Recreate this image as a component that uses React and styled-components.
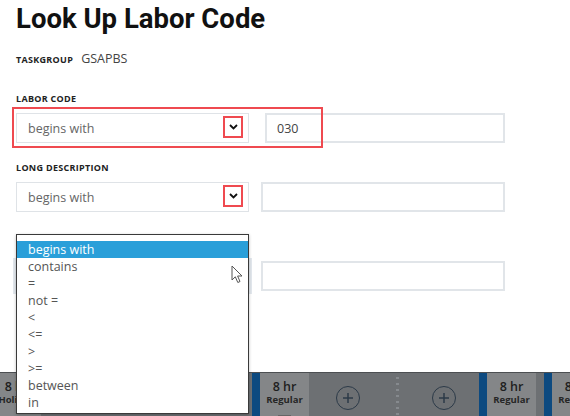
import styled, { createGlobalStyle } from "styled-components"

const GlobalStyle = createGlobalStyle`
  body {
    margin: 0;
    background: #fff;
    font-family: "Open Sans", "Liberation Sans", sans-serif;
  }
`

const Page = styled.div`
  width: 570px;
  height: 416px;
  position: relative;
  overflow: hidden;
  display: flex;
  flex-direction: column;
`

const Modal = styled.div`
  height: 372px;
  flex: none;
  background: #fff;
  padding-left: 16px;
  box-sizing: border-box;
`

const Title = styled.h1`
  margin: 4px 0 0;
  font-family: Roboto, "Liberation Sans", sans-serif;
  font-weight: 700;
  font-size: 27.5px;
  line-height: 30px;
  color: #111;
`

const InfoRow = styled.div`
  margin-top: 17px;
  display: flex;
  align-items: baseline;
  gap: 8px;
  line-height: 16px;
`

const Label = styled.div`
  font-size: 9px;
  font-weight: 700;
  line-height: 10px;
  color: #222;
  letter-spacing: 0.3px;
`

const Value = styled.span`
  font-size: 12.5px;
  color: #444;
`

const Field = styled.div`
  margin-top: ${p => p.$top}px;
`

const Row = styled.div`
  margin-top: 9px;
  width: 489px;
  height: 30px;
  display: flex;
  gap: ${p => p.$gap}px;
`

const Select = styled.div`
  width: 233px;
  flex: none;
  box-sizing: border-box;
  border: 1px solid #dfe3e7;
  background: #fff;
  display: flex;
  align-items: center;
  padding-left: 11px;
  font-size: 12.5px;
  color: #666;
  position: relative;
  box-shadow: ${p => (p.$focus ? "0 0 0 3px #e3e8ee" : "none")};
`

const Chevron = styled.div`
  position: absolute;
  right: 5px;
  top: 2px;
  width: 20px;
  height: 22px;
  box-sizing: border-box;
  border: 2px solid ${p => (p.$marked ? "#ef4a50" : "transparent")};
  display: flex;
  align-items: center;
  justify-content: center;
`

const Input = styled.div`
  flex: 1;
  box-sizing: border-box;
  border: 2px solid #e1e5e9;
  background: #fff;
  display: flex;
  align-items: center;
  padding-left: 10px;
  font-size: 12.5px;
  color: #444;
`

const Marker = styled.div`
  position: absolute;
  left: 12px;
  top: 107px;
  width: 311px;
  height: 41px;
  box-sizing: border-box;
  border: 2px solid #ef4a50;
  pointer-events: none;
`

const Menu = styled.ul`
  position: absolute;
  left: 16px;
  top: 234px;
  width: 233px;
  height: 180px;
  margin: 0;
  padding: 6px 0 0;
  box-sizing: border-box;
  list-style: none;
  background: #fff;
  border: 1px solid #3a3a3a;
  box-shadow: 0 1px 3px rgba(0, 0, 0, 0.25);
`

const Option = styled.li`
  height: 17px;
  line-height: 17px;
  padding-left: 11px;
  font-size: 12.5px;
  color: ${p => (p.$active ? "#fff" : "#555")};
  background: ${p => (p.$active ? "#2a9fd9" : "transparent")};
`

const Cursor = styled.svg`
  position: absolute;
  left: 231px;
  top: 265px;
`

const Strip = styled.div`
  flex: 1;
  display: flex;
  background: #6d7073;
  border-top: 1px solid #4c4f52;
  margin-left: -16px;
  overflow: hidden;
`

const Card = styled.div`
  width: 49px;
  flex: none;
  border-left: 8px solid #0d4a80;
  background: #848688;
  display: flex;
  flex-direction: column;
  align-items: center;
  padding-top: 7px;
  box-sizing: content-box;
`

const Hours = styled.div`
  font-size: 12.5px;
  font-weight: 600;
  line-height: 14px;
  color: #1e1e1e;
`

const Kind = styled.div`
  font-size: 9.5px;
  font-weight: 700;
  line-height: 12px;
  color: #262626;
`

const Rule = styled.div`
  margin-top: 9px;
  width: 13px;
  height: 1px;
  background: #666;
`

const Space = styled.div`
  width: ${p => p.$w}px;
  flex: none;
`

const AddSlot = styled.div`
  width: ${p => p.$w}px;
  flex: none;
  box-sizing: border-box;
  padding: 13px 0 0 ${p => p.$pad}px;
`

const AddButton = styled.div`
  width: 24px;
  height: 24px;
  box-sizing: border-box;
  border-radius: 50%;
  border: 1.5px solid #2c3a48;
  display: flex;
  align-items: center;
  justify-content: center;
`

const Dots = styled.div`
  width: 3px;
  flex: none;
  background-image: radial-gradient(circle, #868a8e 1.2px, transparent 1.5px);
  background-size: 3px 6px;
  background-position: 0 2px;
`

const options = ["begins with", "contains", "=", "not =", "<", "<=", ">", ">=", "between", "in"]

const ChevronIcon = () => (
  <svg width="9" height="6" viewBox="0 0 9 6">
    <path d="M1 1 L4.5 4.5 L8 1" fill="none" stroke="#111" strokeWidth="1.8" />
  </svg>
)

const PlusIcon = () => (
  <svg width="12" height="12" viewBox="0 0 12 12">
    <path d="M6 1 V11 M1 6 H11" stroke="#2c3a48" strokeWidth="1.5" />
  </svg>
)

const DayCard = ({ kind, rule }) => (
  <Card>
    <Hours>8 hr</Hours>
    <Kind>{kind}</Kind>
    {rule && <Rule />}
  </Card>
)

export default function App() {
  return (
    <Page>
      <GlobalStyle />
      <Modal>
        <Title>Look Up Labor Code</Title>
        <InfoRow>
          <Label>TASKGROUP</Label>
          <Value>GSAPBS</Value>
        </InfoRow>

        <Field $top={27}>
          <Label>LABOR CODE</Label>
          <Row $gap={16}>
            <Select>
              begins with
              <Chevron $marked>
                <ChevronIcon />
              </Chevron>
            </Select>
            <Input>030</Input>
          </Row>
        </Field>

        <Field $top={20}>
          <Label>LONG DESCRIPTION</Label>
          <Row $gap={12}>
            <Select>
              begins with
              <Chevron $marked>
                <ChevronIcon />
              </Chevron>
            </Select>
            <Input />
          </Row>
        </Field>

        <Field $top={30}>
          <Label>SHORT DESCRIPTION</Label>
          <Row $gap={12}>
            <Select $focus>begins with</Select>
            <Input />
          </Row>
        </Field>
      </Modal>

      <Strip>
        <DayCard kind="Holiday" />
        <Space $w={211} />
        <DayCard kind="Regular" rule />
        <AddSlot $w={87} $pad={27}>
          <AddButton>
            <PlusIcon />
          </AddButton>
        </AddSlot>
        <Dots />
        <AddSlot $w={80} $pad={33}>
          <AddButton>
            <PlusIcon />
          </AddButton>
        </AddSlot>
        <DayCard kind="Regular" />
        <Space $w={8} />
        <DayCard kind="Regular" />
      </Strip>

      <Marker />

      <Menu>
        {options.map((o, i) => (
          <Option key={o} $active={i === 0}>
            {o}
          </Option>
        ))}
      </Menu>

      <Cursor width="12" height="19" viewBox="0 0 12 19">
        <path
          d="M1 1 L1 15 L4.3 11.8 L6.8 17.5 L9 16.5 L6.6 11 L11 11 Z"
          fill="#fff"
          stroke="#555"
          strokeWidth="1"
          strokeLinejoin="round"
        />
      </Cursor>
    </Page>
  )
}
